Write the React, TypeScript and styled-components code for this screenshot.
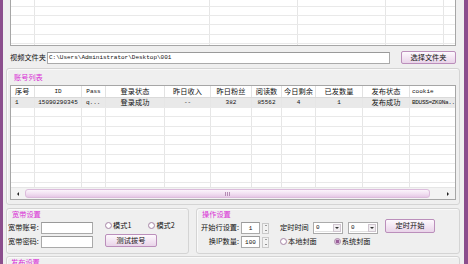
import React from "react";
import styled, { createGlobalStyle } from "styled-components";

const CJK = `"Noto Sans CJK SC", "Noto Sans", sans-serif`;
const MONO = `"Liberation Mono", "DejaVu Sans Mono", monospace`;

const Global = createGlobalStyle`
  html, body { margin: 0; padding: 0; background: #efefef; }
  body { width: 468px; height: 264px; overflow: hidden; }
  * { box-sizing: border-box; }
`;

const Frame = styled.div`
  display: flex;
  width: 468px;
  height: 264px;
  overflow: hidden;
  background: #efefef;
  font-family: ${CJK};
  font-size: 7.2px;
  color: #111;
`;

const Strip = styled.div<{ $w: number }>`
  width: ${(p) => p.$w}px;
  flex: none;
  background: #8b4e8d;
`;

const Content = styled.div`
  flex: 1;
  min-width: 0;
  display: flex;
  flex-direction: column;
  padding: 0 4px 0 3px;
`;

const Mono = styled.span<{ $tight?: boolean }>`
  font-family: ${MONO};
  font-size: 6px;
  letter-spacing: ${(p) => (p.$tight ? "-0.3px" : "0")};
`;

/* ---------- grid lists ---------- */
const ListPanel = styled.div<{ $h: number }>`
  height: ${(p) => p.$h}px;
  background: #fff;
  border: 1px solid #a6a6a6;
  display: flex;
  flex-direction: column;
  overflow: hidden;
  flex: none;
`;

const TopPanel = styled(ListPanel)`
  margin: 0 4px;
  border-top: none;
`;

const GridBody = styled.div`
  flex: 1;
  min-height: 0;
  overflow: hidden;
  display: flex;
  flex-direction: column;
`;

const GridRow = styled.div<{ $h: number; $bg?: string }>`
  display: flex;
  flex: none;
  height: ${(p) => p.$h}px;
  background: ${(p) => p.$bg || "transparent"};
  border-bottom: 1px solid #e9e9e9;
`;

const Cell = styled.div<{ $w: number; $align: "left" | "center"; $line?: string; $pad?: number }>`
  width: ${(p) => p.$w}px;
  flex: none;
  display: flex;
  align-items: center;
  justify-content: ${(p) => (p.$align === "left" ? "flex-start" : "center")};
  padding-left: ${(p) => (p.$align === "left" ? p.$pad ?? 4 : 0)}px;
  border-right: 1px solid ${(p) => p.$line || "#e6e6e6"};
  white-space: nowrap;
  overflow: hidden;
  line-height: 1;
  &:last-child { border-right: none; }
`;

const HeadRow = styled(GridRow)`
  border-bottom: 1px solid #dadada;
`;

/* ---------- scrollbar ---------- */
const HScroll = styled.div`
  display: flex;
  flex: none;
  height: 12px;
  background: #f3f3f3;
  border-top: 1px solid #e6e6e6;
`;

const ScrollBtn = styled.div`
  width: 14px;
  flex: none;
  display: flex;
  align-items: center;
  justify-content: center;
`;

const Arrow = styled.span<{ $dir: "left" | "right" | "up" | "down"; $s?: number }>`
  width: 0;
  height: 0;
  border-style: solid;
  ${(p) => {
    const s = p.$s ?? 2.5;
    switch (p.$dir) {
      case "left":
        return `border-width:${s}px ${s}px ${s}px 0; border-color: transparent #222 transparent transparent;`;
      case "right":
        return `border-width:${s}px 0 ${s}px ${s}px; border-color: transparent transparent transparent #222;`;
      case "up":
        return `border-width:0 ${s}px ${s}px ${s}px; border-color: transparent transparent #444 transparent;`;
      default:
        return `border-width:${s}px ${s}px 0 ${s}px; border-color: #333 transparent transparent transparent;`;
    }
  }}
`;

const Track = styled.div`
  flex: 1;
  display: flex;
  padding: 1px 11px 1px 0;
`;

const Thumb = styled.div`
  flex: 1;
  border: 1px solid #dcbcdc;
  border-radius: 3px;
  background: linear-gradient(#fbf4fb, #f1dff1 55%, #e6c9e6);
  display: flex;
  align-items: center;
  justify-content: center;
  gap: 1px;
`;

const Grip = styled.span`
  width: 1px;
  height: 4px;
  background: #b58db5;
`;

/* ---------- form parts ---------- */
const FolderRow = styled.div`
  display: flex;
  align-items: center;
  height: 13px;
  margin: 5px 4px 0;
  flex: none;
`;

const Label = styled.span<{ $w?: number; $right?: boolean }>`
  ${(p) => (p.$w ? `width:${p.$w}px; flex:none;` : "")}
  text-align: ${(p) => (p.$right ? "right" : "left")};
  white-space: nowrap;
  line-height: 1;
`;

const TextBox = styled.div<{ $w: number }>`
  width: ${(p) => p.$w}px;
  height: 12px;
  flex: none;
  background: #fff;
  border: 1px solid #aaaaaa;
  border-top-color: #9a9a9a;
  display: flex;
  align-items: center;
  padding-left: 1px;
  font-family: ${MONO};
  font-size: 6px;
  white-space: nowrap;
  overflow: hidden;
`;

const SpinBox = styled(TextBox)`
  justify-content: center;
  padding-left: 0;
`;

const Button = styled.button<{ $w: number; $h?: number }>`
  width: ${(p) => p.$w}px;
  height: ${(p) => p.$h ?? 13}px;
  flex: none;
  padding: 0;
  margin: 0;
  border: 1px solid #bb8fbb;
  border-radius: 2px;
  background: linear-gradient(#fdf9fd, #f3e6f3 50%, #e9d4e9);
  font-family: ${CJK};
  font-size: 7.2px;
  color: #111;
  line-height: 1;
  display: flex;
  align-items: center;
  justify-content: center;
`;

const FolderButton = styled(Button)`
  margin-left: auto;
`;

const GroupBox = styled.div`
  border: 1px solid #d4d4d4;
  border-radius: 3px;
  box-shadow: inset 1px 1px 0 #fafafa;
  display: flex;
  flex-direction: column;
  flex: none;
`;

const GroupTitle = styled.div<{ $mt: number }>`
  color: #d92ed6;
  height: 8px;
  line-height: 8px;
  margin-top: ${(p) => p.$mt}px;
  padding-left: 4px;
  flex: none;
  white-space: nowrap;
`;

const AccountBox = styled(GroupBox)`
  margin-top: 4px;
  padding: 0 3px 4px;
`;

const AccountTable = styled(ListPanel)`
  margin-top: 4px;
`;

const BottomRow = styled.div`
  display: flex;
  gap: 7px;
  margin-top: 3px;
  flex: none;
`;

const SmallBox = styled(GroupBox)<{ $w?: number }>`
  ${(p) => (p.$w ? `width:${p.$w}px;` : "flex:1;")}
  padding: 0 1px 5px;
`;

const BoxBody = styled.div<{ $gap: number; $col?: boolean }>`
  display: flex;
  flex-direction: ${(p) => (p.$col ? "column" : "row")};
  margin-top: 4px;
  gap: ${(p) => p.$gap}px;
`;

const Column = styled.div<{ $gap: number }>`
  display: flex;
  flex-direction: column;
  gap: ${(p) => p.$gap}px;
`;

const Line = styled.div<{ $gap?: number; $top?: boolean; $ml?: number }>`
  display: flex;
  align-items: ${(p) => (p.$top ? "flex-start" : "center")};
  height: 12px;
  gap: ${(p) => p.$gap ?? 0}px;
  margin-left: ${(p) => p.$ml ?? 0}px;
`;

const RadioWrap = styled.label<{ $ml?: number }>`
  display: flex;
  align-items: center;
  gap: 1px;
  margin-left: ${(p) => p.$ml ?? 0}px;
  line-height: 1;
  white-space: nowrap;
`;

const RadioDot = styled.span<{ $on?: boolean }>`
  width: 7px;
  height: 7px;
  border-radius: 50%;
  border: 1px solid #a98aa9;
  background: ${(p) =>
    p.$on
      ? "radial-gradient(circle, #9a5f9a 0 1.6px, #d9bcd9 2px, #f4e8f4 3px)"
      : "radial-gradient(circle, #ffffff 0 1.5px, #efe4ef 3px)"};
  flex: none;
`;

const SpinWrap = styled.div`
  display: flex;
  gap: 2px;
  align-items: center;
  height: 12px;
  flex: none;
`;

const SpinBtns = styled.div`
  width: 7px;
  height: 11px;
  display: flex;
  flex-direction: column;
  border: 1px solid #c9c9c9;
  background: #f2f2f2;
`;

const SpinHalf = styled.div`
  flex: 1;
  display: flex;
  align-items: center;
  justify-content: center;
`;

const ComboBox = styled.div`
  width: 30px;
  height: 12px;
  flex: none;
  display: flex;
  background: #fff;
  border: 1px solid #ababab;
  padding: 1px;
`;

const ComboText = styled.div`
  flex: 1;
  display: flex;
  align-items: center;
  padding-left: 1px;
  font-family: ${MONO};
  font-size: 6px;
  border-bottom: 1px solid #e2e2e2;
`;

const ComboBtn = styled.div`
  width: 8px;
  flex: none;
  display: flex;
  align-items: center;
  justify-content: center;
  background: #f1eef1;
  border: 1px solid #d0c6d0;
`;

const TopButton = styled(Button)`
  align-self: flex-start;
  margin-top: -3px;
  margin-left: 5px;
`;

const TimerLabel = styled(Label)`
  margin-left: 9px;
`;

const PublishBox = styled(GroupBox)`
  margin-top: 2px;
  height: 20px;
`;

/* ---------- data ---------- */
type Col = {
  w: number;
  hAlign: "left" | "center";
  head: string;
  headMono?: boolean;
  vAlign: "left" | "center";
  val: string;
  valMono?: boolean;
  pad?: number;
};

const COLS: Col[] = [
  { w: 24, hAlign: "left", head: "序号", vAlign: "left", val: "1", valMono: true },
  { w: 47, hAlign: "center", head: "ID", headMono: true, vAlign: "center", val: "15090290345", valMono: true },
  { w: 24, hAlign: "center", head: "Pass", headMono: true, vAlign: "left", val: "q...", valMono: true },
  { w: 59, hAlign: "center", head: "登录状态", vAlign: "center", val: "登录成功" },
  { w: 46, hAlign: "center", head: "昨日收入", vAlign: "center", val: "--", valMono: true },
  { w: 41, hAlign: "center", head: "昨日粉丝", vAlign: "center", val: "382", valMono: true },
  { w: 30, hAlign: "center", head: "阅读数", vAlign: "center", val: "85562", valMono: true },
  { w: 34, hAlign: "center", head: "今日剩余", vAlign: "center", val: "4", valMono: true },
  { w: 47, hAlign: "center", head: "已发数量", vAlign: "center", val: "1", valMono: true },
  { w: 47, hAlign: "center", head: "发布状态", vAlign: "center", val: "发布成功" },
  { w: 45, hAlign: "left", head: "cookie", headMono: true, vAlign: "left", val: "BDUSS=ZK0Na..", valMono: true, pad: 2 },
];

const TOP_COLS = [24, 175, 88, 88, 58, 11];

const txt = (s: string, mono?: boolean, tight?: boolean) =>
  mono ? <Mono $tight={tight}>{s}</Mono> : s;

function Spin({ value }: { value: string }) {
  return (
    <SpinWrap>
      <SpinBox $w={19}>{value}</SpinBox>
      <SpinBtns>
        <SpinHalf>
          <Arrow $dir="up" $s={1.5} />
        </SpinHalf>
        <SpinHalf>
          <Arrow $dir="down" $s={1.5} />
        </SpinHalf>
      </SpinBtns>
    </SpinWrap>
  );
}

function Combo() {
  return (
    <ComboBox>
      <ComboText>0</ComboText>
      <ComboBtn>
        <Arrow $dir="down" $s={2} />
      </ComboBtn>
    </ComboBox>
  );
}

function Radio({ label, on, ml }: { label: string; on?: boolean; ml?: number }) {
  return (
    <RadioWrap $ml={ml}>
      <RadioDot $on={on} />
      {label}
    </RadioWrap>
  );
}

export default function App() {
  const topHeights = [6.7, 9.33, 9.33, 9.33, 9.33, 9.33];
  const bodyHeights = [10, 9.33, 9.33, 9.33, 9.33, 9.33, 9.33, 9.33, 9.33, 9.33];
  return (
    <>
      <Global />
      <Frame>
        <Strip $w={3} />
        <Content>
          <TopPanel $h={46}>
            <GridBody>
              {topHeights.map((h, i) => (
                <GridRow key={i} $h={h}>
                  {TOP_COLS.map((w, j) => (
                    <Cell key={j} $w={w} $align="left" />
                  ))}
                </GridRow>
              ))}
            </GridBody>
          </TopPanel>

          <FolderRow>
            <Label $w={37}>视频文件夹</Label>
            <TextBox $w={343}>C:\Users\Administrator\Desktop\001</TextBox>
            <FolderButton $w={55}>选择文件夹</FolderButton>
          </FolderRow>

          <AccountBox>
            <GroupTitle $mt={4}>账号列表</GroupTitle>
            <AccountTable $h={115}>
              <HeadRow $h={12}>
                {COLS.map((c, i) => (
                  <Cell key={i} $w={c.w} $align={c.hAlign} $line="#e2e2e2" $pad={c.pad}>
                    {txt(c.head, c.headMono)}
                  </Cell>
                ))}
              </HeadRow>
              <GridBody>
                {bodyHeights.map((h, r) => (
                  <GridRow key={r} $h={h} $bg={r === 0 ? "#e9e9e9" : undefined}>
                    {COLS.map((c, i) => (
                      <Cell key={i} $w={c.w} $align={c.vAlign} $pad={c.pad}>
                        {r === 0 ? txt(c.val, c.valMono, i === COLS.length - 1) : null}
                      </Cell>
                    ))}
                  </GridRow>
                ))}
              </GridBody>
              <HScroll>
                <ScrollBtn>
                  <Arrow $dir="left" />
                </ScrollBtn>
                <Track>
                  <Thumb>
                    <Grip />
                    <Grip />
                    <Grip />
                  </Thumb>
                </Track>
                <ScrollBtn>
                  <Arrow $dir="right" />
                </ScrollBtn>
              </HScroll>
            </AccountTable>
          </AccountBox>

          <BottomRow>
            <SmallBox $w={183}>
              <GroupTitle $mt={1}>宽带设置</GroupTitle>
              <BoxBody $gap={12}>
                <Column $gap={2}>
                  <Line>
                    <Label $w={33}>宽带账号:</Label>
                    <TextBox $w={52} />
                  </Line>
                  <Line>
                    <Label $w={33}>宽带密码:</Label>
                    <TextBox $w={52} />
                  </Line>
                </Column>
                <Column $gap={0}>
                  <Line $top>
                    <Radio label="模式1" />
                    <Radio label="模式2" ml={17} />
                  </Line>
                  <Button $w={52}>测试拔号</Button>
                </Column>
              </BoxBody>
            </SmallBox>

            <SmallBox>
              <GroupTitle $mt={1}>操作设置</GroupTitle>
              <BoxBody $gap={2} $col>
                <Line $gap={2}>
                  <Label $w={41} $right>
                    开始行设置:
                  </Label>
                  <Spin value="1" />
                  <TimerLabel $w={28}>定时时间</TimerLabel>
                  <Line $gap={5} $ml={3}>
                    <Combo />
                    <Combo />
                  </Line>
                  <TopButton $w={50} $h={14}>
                    定时开始
                  </TopButton>
                </Line>
                <Line $gap={2}>
                  <Label $w={41} $right>
                    换IP数量:
                  </Label>
                  <Spin value="100" />
                  <Radio label="本地封面" ml={9} />
                  <Radio label="系统封面" on ml={15} />
                </Line>
              </BoxBody>
            </SmallBox>
          </BottomRow>

          <PublishBox>
            <GroupTitle $mt={1}>发布设置</GroupTitle>
          </PublishBox>
        </Content>
        <Strip $w={4} />
      </Frame>
    </>
  );
}
